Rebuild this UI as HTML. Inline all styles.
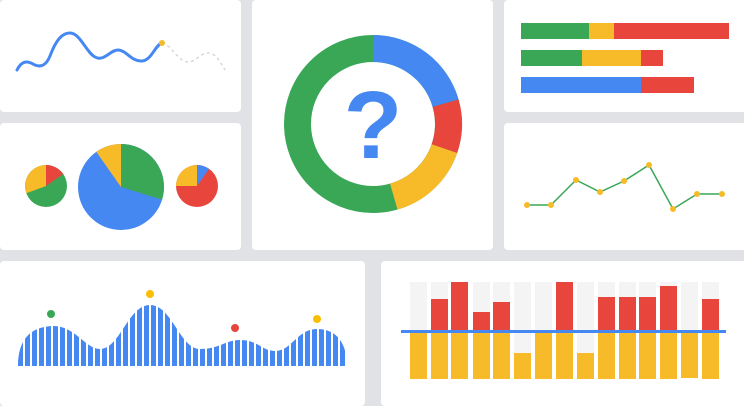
<!DOCTYPE html>
<html><head><style>
body{margin:0;width:744px;height:401px;background:#e1e2e6;overflow:hidden;position:relative}
.c{position:absolute;background:#fff;border-radius:4px}
svg{position:absolute;left:0;top:0}
</style></head><body>
<div class="c" style="left:0;top:0;width:241px;height:112px"></div>
<div class="c" style="left:0;top:123px;width:241px;height:127px"></div>
<div class="c" style="left:252px;top:0;width:241px;height:250px"></div>
<div class="c" style="left:504px;top:0;width:244px;height:112px"></div>
<div class="c" style="left:504px;top:123px;width:244px;height:127px"></div>
<div class="c" style="left:0;top:261px;width:365px;height:145px"></div>
<div class="c" style="left:381px;top:261px;width:370px;height:145px"></div>
<svg width="744" height="401" viewBox="0 0 744 401">
<defs>
<pattern id="st" x="18" y="0" width="7" height="10" patternUnits="userSpaceOnUse"><rect x="0" y="0" width="5" height="10" fill="#4688f1"/></pattern>
</defs>
<!-- line chart A -->
<path d="M17,70 C22,60 28,61 33,64 C40,68 46,66 50,56 C56,40 62,33 70,33 C80,33 86,52 95,57 C104,62 110,50 118,50 C126,50 132,62 142,61 C152,60 155,45 162,43" fill="none" stroke="#4688f1" stroke-width="3" stroke-linecap="round"/>
<path d="M162,43 C172,45 178,62 188,62 C196,62 200,53 208,53 C216,53 220,62 225,70" fill="none" stroke="#cfd3dc" stroke-width="1.3" stroke-dasharray="3,3"/>
<circle cx="162" cy="43" r="3" fill="#f7bb2a"/>
<!-- pies -->
<g transform="translate(46,186)">
<circle r="21" fill="#3aa757"/>
<path d="M0,0 L0,-21 A21,21 0 0 1 17.2,-12 Z" fill="#e8453c"/>
<path d="M0,0 L-19.7,7.2 A21,21 0 0 1 0,-21 Z" fill="#f7bb2a"/>
</g>
<g transform="translate(121,187)">
<circle r="43" fill="#4688f1"/>
<path d="M0,0 L0,-43 A43,43 0 0 1 41.1,12.6 Z" fill="#3aa757"/>
<path d="M0,0 L-24.7,-35.2 A43,43 0 0 1 0,-43 Z" fill="#f7bb2a"/>
</g>
<g transform="translate(197,186)">
<circle r="21" fill="#e8453c"/>
<path d="M0,0 L0,-21 A21,21 0 0 1 12,-17.2 Z" fill="#4688f1"/>
<path d="M0,0 L-21,0 A21,21 0 0 1 0,-21 Z" fill="#f7bb2a"/>
</g>
<!-- donut -->
<g transform="translate(373,124)" fill="none" stroke-width="27">
<circle r="75.5" stroke="#3aa757"/>
<path d="M0,-75.5 A75.5,75.5 0 0 1 72.6,-20.8" stroke="#4688f1"/>
<path d="M72.6,-20.8 A75.5,75.5 0 0 1 71.4,24.6" stroke="#e8453c"/>
<path d="M71.4,24.6 A75.5,75.5 0 0 1 20.8,72.6" stroke="#f7bb2a"/>
</g>
<text x="373" y="158" text-anchor="middle" font-family="Liberation Sans, sans-serif" font-weight="bold" font-size="96" fill="#4688f1">?</text>
<!-- bars D -->
<rect x="521" y="23" width="68" height="16" fill="#3aa757"/><rect x="589" y="23" width="25" height="16" fill="#f7bb2a"/><rect x="614" y="23" width="115" height="16" fill="#e8453c"/>
<rect x="521" y="50" width="61" height="16" fill="#3aa757"/><rect x="582" y="50" width="59" height="16" fill="#f7bb2a"/><rect x="641" y="50" width="22" height="16" fill="#e8453c"/>
<rect x="521" y="77" width="120" height="16" fill="#4688f1"/><rect x="641" y="77" width="53" height="16" fill="#e8453c"/>
<!-- line chart E -->
<polyline points="527,205 551,205 576,180 600,192 624,181 649,165 673,209 697,194 722,194" fill="none" stroke="#3aa757" stroke-width="1.5"/>
<g fill="#f7bb2a"><circle cx="527" cy="205" r="3"/><circle cx="551" cy="205" r="3"/><circle cx="576" cy="180" r="3"/><circle cx="600" cy="192" r="3"/><circle cx="624" cy="181" r="3"/><circle cx="649" cy="165" r="3"/><circle cx="673" cy="209" r="3"/><circle cx="697" cy="194" r="3"/><circle cx="722" cy="194" r="3"/></g>
<!-- stripe area F -->
<path d="M18,366 C18,340 30,327 52,326 C75,325 85,349 100,349 C120,349 128,305 150,305 C172,305 180,349 200,349 C220,349 225,340 240,340 C258,340 262,351 275,351 C292,351 297,329 317,329 C338,329 347,345 347,366 Z" fill="url(#st)"/>
<circle cx="51" cy="314" r="4" fill="#3aa757"/><circle cx="150" cy="294" r="4" fill="#fbbc04"/><circle cx="235" cy="328" r="4" fill="#e8453c"/><circle cx="317" cy="319" r="4" fill="#fbbc04"/>
<!-- bars G -->
<g>
<rect x="410" y="282" width="17" height="50" fill="#f4f4f4"/><rect x="431" y="282" width="17" height="50" fill="#f4f4f4"/><rect x="451" y="282" width="17" height="50" fill="#f4f4f4"/><rect x="473" y="282" width="17" height="50" fill="#f4f4f4"/><rect x="493" y="282" width="17" height="50" fill="#f4f4f4"/><rect x="514" y="282" width="17" height="71" fill="#f4f4f4"/><rect x="535" y="282" width="17" height="50" fill="#f4f4f4"/><rect x="556" y="282" width="17" height="50" fill="#f4f4f4"/><rect x="577" y="282" width="17" height="71" fill="#f4f4f4"/><rect x="598" y="282" width="17" height="50" fill="#f4f4f4"/><rect x="619" y="282" width="17" height="50" fill="#f4f4f4"/><rect x="639" y="282" width="17" height="50" fill="#f4f4f4"/><rect x="660" y="282" width="17" height="50" fill="#f4f4f4"/><rect x="681" y="282" width="17" height="50" fill="#f4f4f4"/><rect x="702" y="282" width="17" height="50" fill="#f4f4f4"/>
</g>
<g fill="#e8453c">
<rect x="431" y="299" width="17" height="33"/><rect x="451" y="282" width="17" height="50"/><rect x="473" y="312" width="17" height="20"/><rect x="493" y="302" width="17" height="30"/><rect x="556" y="282" width="17" height="50"/><rect x="598" y="297" width="17" height="35"/><rect x="619" y="297" width="17" height="35"/><rect x="639" y="297" width="17" height="35"/><rect x="660" y="286" width="17" height="46"/><rect x="702" y="299" width="17" height="33"/>
</g>
<g fill="#f7bb2a">
<rect x="410" y="332" width="17" height="47"/><rect x="431" y="332" width="17" height="47"/><rect x="451" y="332" width="17" height="47"/><rect x="473" y="332" width="17" height="47"/><rect x="493" y="332" width="17" height="47"/><rect x="514" y="353" width="17" height="26"/><rect x="535" y="332" width="17" height="47"/><rect x="556" y="332" width="17" height="47"/><rect x="577" y="353" width="17" height="26"/><rect x="598" y="332" width="17" height="47"/><rect x="619" y="332" width="17" height="47"/><rect x="639" y="332" width="17" height="47"/><rect x="660" y="332" width="17" height="47"/><rect x="681" y="332" width="17" height="46"/><rect x="702" y="332" width="17" height="47"/>
</g>
<rect x="401" y="330" width="325" height="3" fill="#4688f1"/>
</svg>
</body></html>
